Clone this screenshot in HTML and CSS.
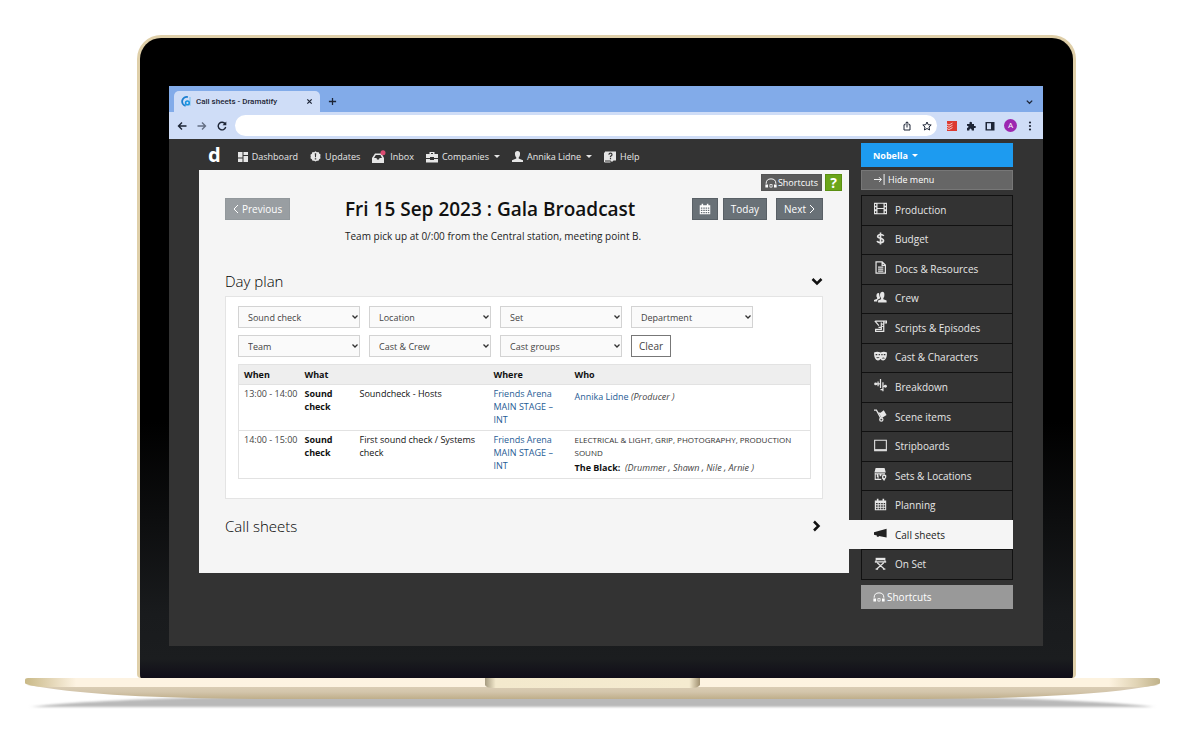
FILE: index.html
```html
<!DOCTYPE html>
<html lang="en">
<head>
<meta charset="utf-8">
<title>Call sheets - Dramatify</title>
<link rel="stylesheet" href="styles.css">
</head>
<body>
<svg class="sprite" aria-hidden="true">
  <symbol id="i-headset" viewBox="0 0 16 14"><path d="M1.500 8Q1.500 1.500 8 1.500T14.500 8" fill="none" stroke="currentColor" stroke-width="1.300"/><path d="M.5 9h3.500v4H.5zM12 9h3.500v4H12z"/><path d="M6.500 9h3v3.500h-3z" fill="none" stroke="currentColor"/></symbol>
  <symbol id="i-down" viewBox="0 0 8 8"><path d="M1.500 2.500L4 5l2.500-2.500" fill="none" stroke="currentColor" stroke-width="1.300"/></symbol>
  <symbol id="i-cal" viewBox="0 0 16 16"><path fill-rule="evenodd" d="M1 3h2.500V1h2v2h5V1h2v2H15v12H1zM2.500 6v1.800h2V6zm3.200 0v1.800h2V6zm3.100 0v1.800h2V6zm3.100 0v1.800h1.800V6zM2.500 9v1.800h2V9zm3.200 0v1.800h2V9zm3.100 0v1.800h2V9zm3.100 0v1.800h1.800V9zM2.500 12v1.800h2V12zm3.200 0v1.800h2V12zm3.100 0v1.800h2V12zm3.100 0v1.800h1.800V12z"/></symbol>
</svg>
<div class="scene">
  <div class="lid">
    <div class="screen">
      <div class="tabstrip">
        <div class="tab">
          <svg class="favicon" viewBox="0 0 12 12"><path d="M7.500 1.200A4.900 4.900 0 0 0 5 10.800" fill="none" stroke="#1c7fd0" stroke-width="2"/><path d="M9.800 1v9.500" stroke="#8ec7f0" stroke-width="1.500"/><circle cx="7" cy="7.500" r="2" fill="none" stroke="#1593e0" stroke-width="1.700"/></svg>
          <span class="tab-title">Call sheets - Dramatify</span>
          <button class="plain" aria-label="Close tab"><svg class="ic7" viewBox="0 0 8 8"><path d="M1.500 1.500l5 5m0-5l-5 5" class="line"/></svg></button>
        </div>
        <button class="plain newtab" aria-label="New tab"><svg class="ic9" viewBox="0 0 10 10"><path d="M5 1v8M1 5h8" class="line"/></svg></button>
        <button class="plain tabmenu" aria-label="Search tabs"><svg class="ic9" viewBox="0 0 10 10"><path d="M2 4l3 3 3-3" class="line"/></svg></button>
      </div>
      <div class="toolbar">
        <button class="plain" aria-label="Back"><svg class="ic10" viewBox="0 0 10 10"><path d="M9.500 5H1.500M5 1.500L1.500 5 5 8.500" class="line"/></svg></button>
        <button class="plain faded" aria-label="Forward"><svg class="ic10" viewBox="0 0 10 10"><path d="M.5 5h8M5 1.500L8.500 5 5 8.500" class="line"/></svg></button>
        <button class="plain" aria-label="Reload"><svg class="ic10" viewBox="0 0 10 10"><path d="M8.200 3A3.800 3.800 0 1 0 8.700 6" class="line"/><path d="M9.300.5v3.800H5.500z"/></svg></button>
        <div class="address">
          <input type="text" aria-label="Address">
          <button class="plain" aria-label="Share"><svg class="ic10" viewBox="0 0 10 10"><path d="M3.500 3.700H2V9h6V3.700H6.500M5 6.500V1M3.300 2.500L5 .8l1.700 1.700" class="thin"/></svg></button>
          <button class="plain" aria-label="Bookmark"><svg class="ic10" viewBox="0 0 10 10"><path d="M5 1l1.200 2.700 3 .3L7 6l.6 3L5 7.500 2.400 9 3 6 .8 4l3-.3z" class="thin"/></svg></button>
        </div>
        <div class="extensions">
          <svg class="ic10" viewBox="0 0 10 10"><path d="M0 0h10v10H0z" fill="#dc3a30"/><path d="M0 3l2 1 3.500-2M0 5.300l2 1 3.500-2M0 7.600l2 1 3.500-2" fill="none" stroke="#fff" stroke-width=".7"/></svg>
          <svg class="ic10" viewBox="0 0 10 10"><path d="M1 3h2.500Q3 .8 4.700.8T6 3h2v2q2-.4 2 1T8 7v2.500H5.800Q5.600 7.500 4.500 7.500T3.300 9.500H1V7Q2.500 6.800 2.500 5.800T1 4.800z"/></svg>
          <svg class="ic10" viewBox="0 0 10 10"><path fill-rule="evenodd" d="M.5 1h9v8.500h-9zM2 2.300v5.900h4V2.300z"/></svg>
          <span class="avatar">A</span>
          <svg class="ic10 dots" viewBox="0 0 10 10"><circle cx="5" cy="1.500" r="1.100"/><circle cx="5" cy="5" r="1.100"/><circle cx="5" cy="8.500" r="1.100"/></svg>
        </div>
      </div>
      <div class="app">
        <div class="primary">
          <nav class="topnav">
            <a class="brand" href="#">d</a>
            <a href="#"><svg class="ic10" viewBox="0 0 10 10"><path d="M0 0h4.500v5.500H0zM5.500 0H10v3H5.500zM0 6.500h4.500V10H0zM5.500 4H10v6H5.500z"/></svg>Dashboard</a>
            <a href="#"><svg class="ic11" viewBox="0 0 12 12"><path fill-rule="evenodd" d="M6 .3l1.500 1 1.800-.2.700 1.600 1.500 1L11.200 6l.3 2-1.500 1-.7 1.600-1.800-.1-1.500 1-1.500-1-1.800.1L2 9 .5 8l.3-2-.3-2L2 3l.7-1.800 1.800.1zM5.200 2.500l.3 4.300h1l.3-4.300zm0 5.300v1.500h1.600V7.800z"/></svg>Updates</a>
            <a href="#"><svg class="ic14" viewBox="0 0 14 14"><path fill-rule="evenodd" d="M3 3.500h6.500L12 8v5H0V8zm.8 1.500L2 8h2.500q0 1.800 1.500 1.800T7.500 8H10L8.500 5z"/><circle cx="11" cy="2.800" r="2.500" fill="#dc4a70"/></svg>Inbox</a>
            <a href="#"><svg class="ic12" viewBox="0 0 12 12"><path fill-rule="evenodd" d="M3.500 1h5v2H12v4H8V6H4v1H0V3h3.500zM5 2v1h2V2zM0 8h4v1h4V8h4v3.500H0z"/></svg>Companies<i class="caret"></i></a>
            <a href="#"><svg class="ic11" viewBox="0 0 12 12"><path d="M6 0q2.800 0 2.800 3T7.300 7v1.200L12 10v2H0v-2l4.700-1.800V7Q3.200 6 3.200 3T6 0z"/></svg>Annika Lidne<i class="caret"></i></a>
            <a href="#"><svg class="ic12" viewBox="0 0 12 12"><path d="M1 .5h11v9H9.500L8 11 6.500 9.500H1z"/><path d="M.5 1.500V11h6" fill="none" stroke="currentColor"/><path d="M4.900 3.700Q5 2.200 6.500 2.200T8 3.700Q8 4.600 6.500 5.300V6.200M6.500 7v1.300" fill="none" stroke="#333" stroke-width="1.200"/></svg>Help</a>
          </nav>
          <main class="panel">
            <div class="helpers">
              <button class="btn short"><svg class="ic12" viewBox="0 0 16 14"><use href="#i-headset"/></svg>Shortcuts</button>
              <button class="btn help">?</button>
            </div>
            <header class="dayhead">
              <button class="btn prev"><svg class="chev" viewBox="0 0 6 10"><path d="M5 1L1 5l4 4" class="thin"/></svg>Previous</button>
              <h1>Fri 15 Sep 2023 : Gala Broadcast</h1>
              <div class="dayactions">
                <button class="btn cal" aria-label="Calendar"><svg class="ic12" viewBox="0 0 16 16"><use href="#i-cal"/></svg></button>
                <button class="btn">Today</button>
                <button class="btn next">Next<svg class="chev" viewBox="0 0 6 10"><path d="M1 1l4 4-4 4" class="thin"/></svg></button>
              </div>
              <p>Team pick up at 0/:00 from the Central station, meeting point B.</p>
            </header>
            <div class="section first">
              <h2>Day plan</h2>
              <button class="plain" aria-label="Collapse"><svg class="ic12" viewBox="0 0 12 12"><path d="M1.500 4L6 8.500 10.500 4" class="bold"/></svg></button>
            </div>
            <section class="card">
              <form class="filters">
                <label class="pick"><select aria-label="Type"><option>Sound check</option></select><svg><use href="#i-down"/></svg></label>
                <label class="pick"><select aria-label="Location"><option>Location</option></select><svg><use href="#i-down"/></svg></label>
                <label class="pick"><select aria-label="Set"><option>Set</option></select><svg><use href="#i-down"/></svg></label>
                <label class="pick"><select aria-label="Department"><option>Department</option></select><svg><use href="#i-down"/></svg></label>
                <label class="pick"><select aria-label="Team"><option>Team</option></select><svg><use href="#i-down"/></svg></label>
                <label class="pick"><select aria-label="Cast and crew"><option>Cast &amp; Crew</option></select><svg><use href="#i-down"/></svg></label>
                <label class="pick"><select aria-label="Cast groups"><option>Cast groups</option></select><svg><use href="#i-down"/></svg></label>
                <button type="button" class="clear">Clear</button>
              </form>
              <table>
                <colgroup><col class="c-when"><col class="c-what"><col class="c-desc"><col class="c-where"><col></colgroup>
                <thead><tr><th>When</th><th colspan="2">What</th><th>Where</th><th>Who</th></tr></thead>
                <tbody>
                  <tr><td class="time">13:00 - 14:00</td><td><b>Sound check</b></td><td>Soundcheck - Hosts</td><td><a href="#">Friends Arena MAIN STAGE – INT</a></td><td><div class="person"><a href="#">Annika Lidne</a> <em>(Producer )</em></div></td></tr>
                  <tr><td class="time">14:00 - 15:00</td><td><b>Sound check</b></td><td>First sound check / Systems check</td><td><a href="#">Friends Arena MAIN STAGE – INT</a></td><td><div class="depts">ELECTRICAL &amp; LIGHT, GRIP, PHOTOGRAPHY, PRODUCTION SOUND</div><div class="person"><b>The Black:</b>&nbsp; <em>(Drummer , Shawn , Nile , Arnie )</em></div></td></tr>
                </tbody>
              </table>
            </section>
            <div class="section">
              <h2>Call sheets</h2>
              <button class="plain" aria-label="Expand"><svg class="ic12" viewBox="0 0 12 12"><path d="M3 1.500L7.500 6 3 10.500" class="bold"/></svg></button>
            </div>
          </main>
        </div>
        <aside class="sidebar">
          <button class="company">Nobella<i class="caret"></i></button>
          <button class="hide"><svg class="ic11" viewBox="0 0 12 12"><path d="M0 6h8M5.500 3.500L8 6 5.500 8.500M11 0v12" class="thin"/></svg>Hide menu</button>
          <nav class="menu">
            <a href="#"><svg viewBox="0 0 16 16"><path fill-rule="evenodd" d="M0 1h16v14H0zm1.200 1.500v2h1.600v-2zm0 4v2.500h1.600V6.500zm0 5v2h1.600v-2zM4.300 2.300v5h7.400v-5zm0 6.400v5h7.400v-5zm8.900-6.200v2h1.600v-2zm0 4v2.500h1.600V6.500zm0 5v2h1.600v-2z"/></svg>Production</a>
            <a href="#"><svg viewBox="0 0 16 16"><path d="M12 4.800Q11 3 8 3T4.500 5.300Q4.500 7 8 7.700t3.700 3Q11.700 13 8 13t-4-2M8 .5v15" fill="none" stroke="currentColor" stroke-width="2"/></svg>Budget</a>
            <a href="#"><svg viewBox="0 0 16 16"><path d="M2.500 1h7.500l4 4v10H2.500zM10 1v4.500h4M5 7.500h6.500M5 10h6.500M5 12.500h6.500" fill="none" stroke="currentColor" stroke-width="1.500"/></svg>Docs &amp; Resources</a>
            <a href="#"><svg viewBox="0 0 16 16"><path d="M10 1q3 0 2.800 3.800T11.500 8.500V10l4 1.700V14H5v-2.300L8.700 10V8.500Q7.300 7.500 7.300 4.500T10 1z"/><path d="M5.500 2.500q1 0 .9 1.500.3 3 1.300 4.800L4 11v2H0v-1.800l3.800-1.700V8Q2.800 7.500 3 5t2.500-2.500z"/></svg>Crew</a>
            <a href="#"><svg viewBox="0 0 16 16"><path d="M1 1l5 6M6 1.500h9.500v2H13M12 2v12H2v-2.500h7V3M5.500 9h3M10 5h2M10 8h2M2 1.500h4" fill="none" stroke="currentColor" stroke-width="1.500"/></svg>Scripts &amp; Episodes</a>
            <a href="#"><svg viewBox="0 0 16 16"><path fill-rule="evenodd" d="M0 3q4-2 8 0 4-2 8 0 0 9-4.500 10-2 0-3.500-2-1.500 2-3.500 2Q0 12 0 3zm2 2v1.500h2V5zm3.700 0v1.500h1.600V5zm3.300 0v1.500h1.600V5zm3 0v1.500h2V5zM2.500 9q2.200 2.500 4.500 0zm7 1.500h4q-2-2.500-4 0z"/></svg>Cast &amp; Characters</a>
            <a href="#"><svg viewBox="0 0 16 16"><path d="M2 6h6M8 0v11M5 3v6M11 4v9M8 13h3M11 9h4M11 12V15" fill="none" stroke="currentColor" stroke-width="1.500"/><circle cx="2" cy="6" r="1.800"/><circle cx="14" cy="9" r="1.800"/></svg>Breakdown</a>
            <a href="#"><svg viewBox="0 0 16 16"><path d="M0 1.500h3l6 11" fill="none" stroke="currentColor" stroke-width="1.500"/><path d="M5 4l3 .5L12 1.500l3.500 6L9.500 11z"/><circle cx="9" cy="13" r="2" fill="none" stroke="currentColor" stroke-width="1.500"/></svg>Scene items</a>
            <a href="#"><svg viewBox="0 0 16 16"><path d="M.8 1.500h14.400v13H.8z" fill="none" stroke="currentColor" stroke-width="1.300"/><path d="M1 12.500h14v2H1z"/></svg>Stripboards</a>
            <a href="#"><svg viewBox="0 0 16 16"><path d="M2 0h11l1.500 5.500H.5zM1.500 6.500h12V8H9v2H7V8H5v3H3.500V8H1.500z"/><path d="M1.500 6v8H9M5 9v4" fill="none" stroke="currentColor" stroke-width="1.300"/><path d="M10 13q-1-5 2.500-5t2.500 3.500L12.500 16z"/><circle cx="12.500" cy="11" r="1.200" fill="#333"/></svg>Sets &amp; Locations</a>
            <a href="#"><svg viewBox="0 0 16 16"><use href="#i-cal"/></svg>Planning</a>
            <a href="#" class="active"><svg viewBox="0 0 16 16"><path d="M15.500 2v11L6 11v1H3.500v-1.500L0 9.500V6.500z"/></svg>Call sheets</a>
            <a href="#"><svg viewBox="0 0 16 16"><path d="M1 6h14M2.500 4v3M13.500 4v3M3 15l9-8M13 15L4 7M2 15h3M11 15h3" fill="none" stroke="currentColor" stroke-width="1.500"/><path d="M2 1h12v3H2z"/></svg>On Set</a>
          </nav>
          <button class="shortcuts"><svg class="ic12" viewBox="0 0 16 14"><use href="#i-headset"/></svg>Shortcuts</button>
        </aside>
      </div>
    </div>
  </div>
  <svg class="base" viewBox="0 0 1135 38" preserveAspectRatio="none" aria-hidden="true">
    <defs>
      <linearGradient id="g-top"><stop offset="0" stop-color="#c9b987"/><stop offset=".02" stop-color="#e0d2b0"/><stop offset=".045" stop-color="#fdf3e2"/><stop offset=".955" stop-color="#fdf3e0"/><stop offset=".98" stop-color="#e0d3b4"/><stop offset="1" stop-color="#c0b28a"/></linearGradient>
      <linearGradient id="g-low" x2="0" y2="1"><stop offset="0" stop-color="#dccfb8"/><stop offset=".5" stop-color="#d3c5ab"/><stop offset="1" stop-color="#bfae8a"/></linearGradient>
      <linearGradient id="g-notch"><stop offset="0" stop-color="#a69b80"/><stop offset=".05" stop-color="#f3e9cd"/><stop offset=".95" stop-color="#f5ebd0"/><stop offset="1" stop-color="#a09070"/></linearGradient>
      <filter id="soft" x="-5%" y="-50%" width="110%" height="200%"><feGaussianBlur stdDeviation="2 1"/></filter>
    </defs>
    <path d="M6 29Q60 22 200 19H935Q1070 22 1129 29Z" fill="#b9b9b9" filter="url(#soft)"/>
    <path d="M2 7L15 9Q80 20 235 21H900Q1055 20 1120 9L1133 7Z" fill="url(#g-low)"/>
    <path d="M0 2Q0 0 3 0H1132Q1135 0 1135 2V5Q1135 7 1118 9H17Q0 7 0 5Z" fill="url(#g-top)"/>
    <path d="M460 0H675V7Q673 10 667 10H468Q461 10 460 7Z" fill="url(#g-notch)"/>
  </svg>
</div>
</body>
</html>
```
FILE: styles.css
```css
* { box-sizing: border-box; }
body { margin: 0; background: #fff; font-family: "Open Sans", "Noto Sans", sans-serif; font-size: 9px; line-height: 13px; color: #222; }
svg { fill: currentColor; flex: none; display: block; }
a { color: inherit; text-decoration: none; }
button, select, input { font: inherit; color: inherit; margin: 0; }
button { cursor: pointer; }
.sprite { width: 0; height: 0; position: absolute; }
.line, .thin, .bold { fill: none; stroke: currentColor; stroke-width: 1.400; }
.thin { stroke-width: 1; }
.bold { stroke-width: 2.500; }
.ic7 { width: 7px; height: 7px; }
.ic9 { width: 9px; height: 9px; }
.ic10 { width: 10px; height: 10px; }
.ic11 { width: 11px; height: 11px; }
.ic12 { width: 12px; height: 12px; }
.ic14 { width: 14px; height: 14px; }
.plain { background: none; border: 0; padding: 0; display: flex; }

.scene { padding: 35px 40px 0 25px; }
.lid { margin: 0 84px 0 112px; padding: 48px 30px 32px 29px; border: 3px solid #dfcfa9; border-bottom-width: 0; border-radius: 24px 24px 4px 4px; background: linear-gradient(#000 60%, #191b1d 90%, #1b1d1f 97%, #100d18); }
.screen { background: #333; color: #e6e6e6; }
.base { width: 100%; height: 38px; overflow: visible; }

.tabstrip { display: flex; align-items: center; height: 26px; padding: 5px 9px 0 5px; background: #82abe9; color: #1d2536; }
.tab { display: flex; align-items: center; width: 146px; height: 21px; padding: 0 7px; border-radius: 5px 5px 0 0; background: #cfddf7; font-family: Roboto, sans-serif; font-size: 8px; font-weight: 500; }
.favicon { width: 11px; height: 11px; margin-right: 4px; }
.tab-title { flex: 1; }
.newtab { margin-left: 8px; }
.tabmenu { margin-left: auto; }
.toolbar { display: flex; align-items: center; gap: 10px; height: 27px; padding: 0 8px; background: #cfddf7; color: #1d2536; }
.faded { opacity: .6; }
.address { flex: 1; display: flex; align-items: center; gap: 10px; height: 21px; margin-left: -2px; padding: 0 5px 0 10px; border-radius: 11px; background: #fff; }
.address input { flex: 1; min-width: 0; border: 0; background: none; outline: none; }
.extensions { display: flex; align-items: center; gap: 9px; }
.avatar { width: 13px; height: 13px; border-radius: 50%; background: #9c27b0; color: #fff; font-family: Roboto, sans-serif; font-size: 8px; text-align: center; }
.dots { margin-left: -1px; }

.app { display: flex; gap: 12px; padding: 0 30px 37px; }
.primary { flex: 1; min-width: 0; }
.topnav { display: flex; align-items: center; gap: 12px; height: 31px; padding: 4px 0 0 9px; font-size: 9px; }
.topnav a { display: flex; align-items: center; gap: 4px; }
.topnav .brand { margin-right: 5px; padding-bottom: 5px; font-family: "Noto Sans", sans-serif; font-size: 20px; font-weight: 700; color: #fff; }
.caret { border: 3px solid transparent; border-top-color: currentColor; border-bottom: 0; margin-left: 1px; }

.panel { background: #f5f5f5; color: #222; padding: 4px 26px 35px; }
.helpers { display: flex; justify-content: flex-end; gap: 3px; margin-right: -19px; }
.btn { display: flex; align-items: center; justify-content: center; gap: 3px; height: 22px; padding: 0 7px; border: 1px solid #596066; background: #697177; color: #fff; font-size: 10px; }
.btn.short { height: 17px; padding: 0 3px; gap: 1px; border-color: #555; background: #5c5c5c; font-size: 9px; }
.btn.help { width: 17px; height: 17px; padding: 0; border-color: #5b8f12; background: #6ba51a; font-size: 14px; font-weight: 700; }
.btn.prev { border-color: #92989c; background: #999ea2; }
.btn.cal { padding: 0 6px; }
.btn.next { margin-left: 4px; }
.chev { width: 6px; height: 10px; }
.dayhead { display: grid; grid-template-columns: 120px 1fr auto; grid-template-rows: 24px auto; align-items: center; justify-items: start; margin-top: 6px; row-gap: 9px; }
.dayhead h1 { margin: 0; font-size: 19px; line-height: 24px; font-weight: 600; color: #111; white-space: nowrap; }
.dayhead p { grid-column: 2 / 4; margin: 0; font-size: 10px; }
.dayactions { display: flex; gap: 5px; }
.section { display: flex; align-items: center; justify-content: space-between; height: 24px; }
.section h2 { margin: 0; font-size: 15px; font-weight: 300; line-height: 24px; color: #000; }
.section .plain { color: #111; }
.section.first { margin-top: 26px; }
.card { margin: 3px 0 15px; padding: 9px 11px 19px 12px; border: 1px solid #e4e4e4; background: #fff; }
.filters { display: grid; grid-template-columns: repeat(4, 122px); gap: 7px 9px; margin-bottom: 7px; }
.pick { position: relative; }
.pick select { appearance: none; display: block; width: 100%; height: 22px; padding: 0 9px; border: 1px solid #d3d3d3; border-radius: 0; background: #fafafa; color: #444; }
.pick svg { position: absolute; right: 1px; top: 7px; width: 8px; height: 8px; color: #333; pointer-events: none; }
.clear { justify-self: start; height: 22px; padding: 0 7px; border: 1px solid #777; background: #fff; color: #444; font-size: 10px; }
table { width: 100%; border: 1px solid #e2e2e2; border-collapse: collapse; table-layout: fixed; }
.c-when { width: 61px; }
.c-what { width: 55px; }
.c-desc { width: 134px; }
.c-where { width: 81px; }
th { padding: 3px 5px; text-align: left; background: #eee; font-weight: 700; color: #111; }
td { padding: 2px 5px 4px; vertical-align: top; border-top: 1px solid #e2e2e2; color: #111; }
td a { color: #1f5c95; }
.time, td em, .depts { color: #444; }
.time { padding-right: 0; white-space: nowrap; }
.depts { font-size: 8px; color: #333; }
td b { font-weight: 700; }
.person { margin-top: 3px; }
.depts + .person { margin-top: 2px; }

.sidebar { width: 152px; padding-top: 4px; display: flex; flex-direction: column; font-size: 10px; }
.sidebar > button { display: flex; align-items: center; border: 0; padding: 0 12px; color: #fff; gap: 3px; }
.sidebar .company { height: 24px; margin-bottom: 3px; background: #1d9bf0; font-size: 9px; font-weight: 700; }
.sidebar .hide { height: 20px; margin-bottom: 5px; padding-bottom: 2px; border: 1px solid #777; background: #666; font-size: 9px; }
.sidebar .shortcuts { height: 24px; margin-top: 5px; background: #999; gap: 2px; }
.menu { display: grid; grid-auto-rows: 1fr; min-height: 385px; border: 1px solid #111; border-top: 0; }
.menu a { display: flex; align-items: center; gap: 8px; padding-left: 12px; border-top: 1px solid #111; }
.menu svg { width: 13px; height: 13px; margin-bottom: 3px; }
.menu .active { margin: 0 -1px 0 -13px; padding-left: 25px; background: #f5f5f5; border-color: #f5f5f5; color: #222; }
```
